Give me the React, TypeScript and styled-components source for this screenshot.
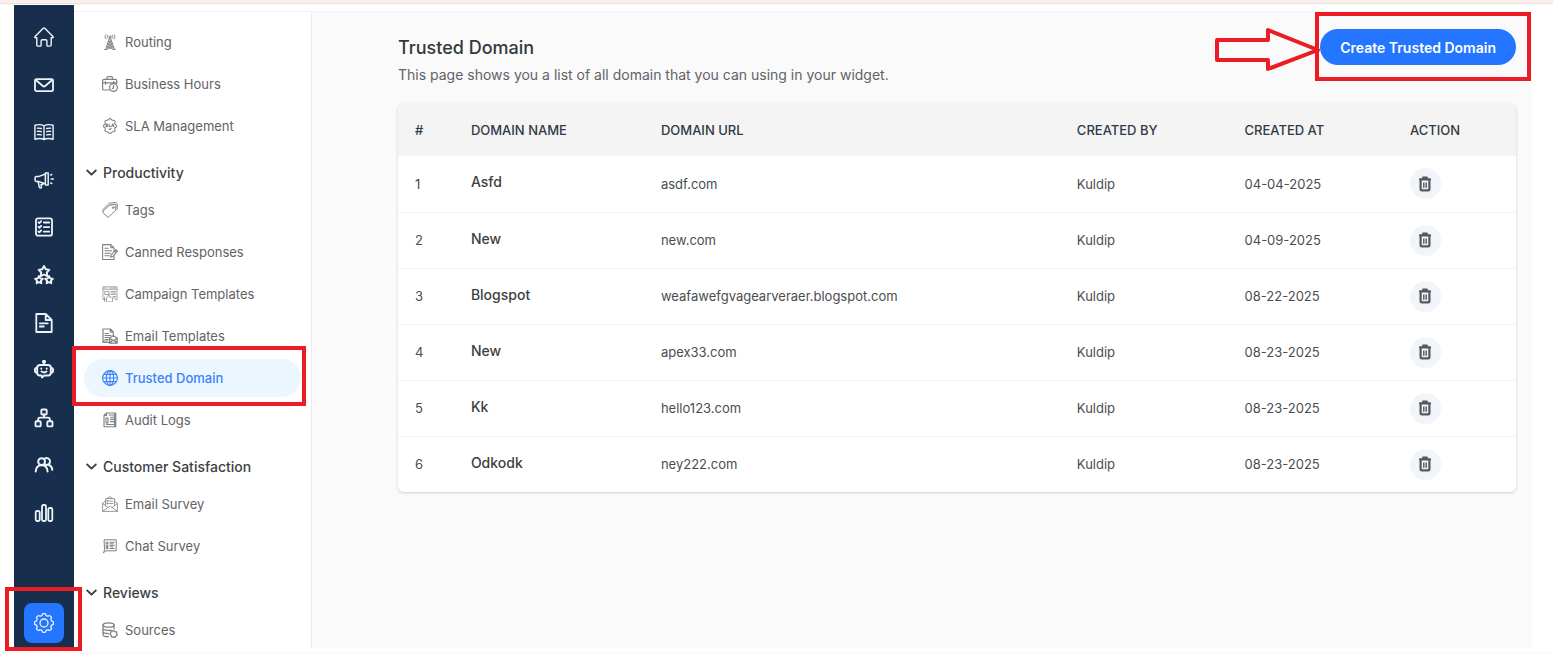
import React from "react";
import styled, { createGlobalStyle, css } from "styled-components";

const GlobalStyle = createGlobalStyle`
  *, *::before, *::after { box-sizing: border-box; }
  body {
    margin: 0;
    background: #ffffff;
    color: #3c4043;
    font-family: Inter, "Liberation Sans", sans-serif;
    font-size: 14px;
  }
  button { font: inherit; border: 0; cursor: pointer; }
  a { color: inherit; text-decoration: none; }
`;

const Page = styled.div`
  display: flex;
  flex-direction: column;
  height: 100vh;
  min-width: 1100px;
`;

const TopStrip = styled.div`
  flex: none;
  height: 4px;
  background: #f9f0ed;
  border-bottom: 1px solid #eee0dd;
`;

const BottomStrip = styled.div`
  flex: none;
  height: 2px;
  background: #fafafa;
`;

const Shell = styled.div`
  display: flex;
  flex: 1;
  min-height: 0;
  margin: 1px 21px 4px 14px;
`;

const Rail = styled.nav`
  display: flex;
  flex: none;
  flex-direction: column;
  align-items: center;
  width: 60px;
  padding: 20px 0 5px;
  background: #172e4d;
  color: #eef3f8;
`;

const RailList = styled.ul`
  display: flex;
  flex: 1;
  flex-direction: column;
  justify-content: space-between;
  margin: 0 0 78px;
  padding: 0;
  list-style: none;
`;

const RailLink = styled.a`
  display: flex;
  align-items: center;
  justify-content: center;
  width: 40px;
  height: 24px;
`;

const Marked = styled.div`
  position: relative;
`;

const Marker = styled.span<{ $inset: string }>`
  position: absolute;
  inset: ${(p) => p.$inset};
  z-index: 2;
  border: 4px solid #ec1c24;
  pointer-events: none;
`;

const SettingsLink = styled.a`
  display: flex;
  align-items: center;
  justify-content: center;
  width: 40px;
  height: 40px;
  border-radius: 8px;
  background: #2475ff;
`;

const Content = styled.div`
  display: flex;
  flex: 1;
  min-width: 0;
  margin-top: 6px;
  border-top: 1px solid #f3f3f3;
`;

const Sidebar = styled.nav`
  flex: none;
  width: 238px;
  padding: 9px 10px 0;
  border-right: 1px solid #ececec;
  background: #ffffff;
  overflow-x: visible;
  overflow-y: clip;
`;

const GroupToggle = styled.button`
  display: flex;
  align-items: center;
  gap: 6px;
  width: 100%;
  height: 42px;
  padding: 8px 0 0 2px;
  background: none;
  color: #3c3f43;
  font-size: 14px;
  font-weight: 500;
`;

const GroupList = styled.ul`
  margin: 0;
  padding: 0;
  list-style: none;
`;

const NavItem = styled.li`
  position: relative;
  padding: 2px 0;
`;

const NavLink = styled.a<{ $active?: boolean }>`
  display: flex;
  align-items: center;
  gap: 7px;
  height: 38px;
  padding-left: 18px;
  border-radius: 19px;
  color: #5f6368;
  font-size: 13px;
  svg {
    color: #7d8084;
  }
  ${(p) =>
    p.$active &&
    css`
      background: #ecf6ff;
      color: #3c83f6;
      font-weight: 500;
      svg {
        color: #3c83f6;
      }
    `}
`;

const Main = styled.main`
  flex: 1;
  min-width: 0;
  padding: 17px 16px 0 86px;
  background: #fafafa;
`;

const PageHead = styled.header`
  display: flex;
  align-items: flex-start;
  justify-content: space-between;
  margin-bottom: 18px;
`;

const Title = styled.h1`
  margin: 7px 0 5px;
  color: #35383b;
  font-size: 18px;
  font-weight: 500;
  line-height: 24px;
`;

const Subtitle = styled.p`
  margin: 0;
  color: #5f6368;
  font-size: 14px;
  line-height: 20px;
`;

const CreateButton = styled.button`
  height: 36px;
  padding: 0 20px;
  border-radius: 18px;
  background: #2475ff;
  color: #ffffff;
  font-size: 14px;
  font-weight: 600;
  white-space: nowrap;
`;

const ArrowSvg = styled.svg`
  position: absolute;
  right: 100%;
  top: -2px;
  z-index: 3;
  overflow: visible;
`;

const TableCard = styled.div`
  overflow: hidden;
  border-radius: 6px;
  background: #ffffff;
  box-shadow: 0 1px 3px rgba(0, 0, 0, 0.18);
`;

const Table = styled.table`
  width: 100%;
  border-collapse: collapse;
  table-layout: fixed;
`;

const HeadCell = styled.th<{ $width: string }>`
  width: ${(p) => p.$width};
  height: 53px;
  padding: 0 0 0 17px;
  background: #f4f4f4;
  color: #2f3a45;
  font-size: 13px;
  font-weight: 500;
  text-align: left;
`;

const BodyRow = styled.tr`
  height: 56px;
  & + & {
    border-top: 1px solid #f3f3f3;
  }
`;

const Cell = styled.td<{ $strong?: boolean }>`
  padding: 0 0 0 17px;
  color: #4a4d50;
  font-size: 13px;
  ${(p) =>
    p.$strong &&
    css`
      padding-bottom: 4px;
      color: #3c3f42;
      font-size: 14px;
      font-weight: 500;
    `}
`;

const DeleteButton = styled.button`
  display: flex;
  align-items: center;
  justify-content: center;
  width: 31px;
  height: 31px;
  padding: 0;
  border-radius: 50%;
  background: #f1f5f9;
  color: #55585c;
`;

type IconProps = { size?: number; box?: number; weight?: number; children: React.ReactNode };

function Icon({ size = 20, box = 20, weight = 1.5, children }: IconProps) {
  return (
    <svg
      width={size}
      height={size}
      viewBox={`0 0 ${box} ${box}`}
      fill="none"
      stroke="currentColor"
      strokeWidth={weight}
      strokeLinecap="round"
      strokeLinejoin="round"
      aria-hidden="true"
    >
      {children}
    </svg>
  );
}

const star = (cx: number, cy: number, r: number) =>
  Array.from({ length: 10 }, (_, i) => {
    const radius = i % 2 ? r * 0.52 : r;
    const angle = -Math.PI / 2 + (i * Math.PI) / 5;
    return `${(cx + radius * Math.cos(angle)).toFixed(2)},${(cy + radius * Math.sin(angle)).toFixed(2)}`;
  }).join(" ");

const railIcons: { label: string; icon: React.ReactNode }[] = [
  {
    label: "Home",
    icon: (
      <Icon weight={1.4}>
        <path d="M2.8 10.8H1.6c-.8 0-1-.8-.5-1.3L9.2 1.3c.5-.5 1.1-.5 1.6 0l8.1 8.2c.5.5.3 1.3-.5 1.3h-1.2v7c0 .8-.5 1.3-1.3 1.3h-2.2c-.5 0-.8-.3-.8-.8v-4.2c0-.8-.5-1.3-1.2-1.3H8.3c-.8 0-1.200.5-1.200 1.300v4.200c0 .5-.3.8-.8.8H4.100c-.8 0-1.300-.5-1.300-1.300z" />
      </Icon>
    ),
  },
  {
    label: "Inbox",
    icon: (
      <Icon weight={1.8}>
        <rect x="1" y="4.200" width="18" height="12" rx="1.6" />
        <path d="M1.600 4.800 8.800 11c.8.7 1.600.7 2.400 0l7.200-6.200" />
      </Icon>
    ),
  },
  {
    label: "Knowledge base",
    icon: (
      <Icon weight={1.4}>
        <path d="M10 4C8 2.600 4 2.500.9 3.200v14c3.100-.8 7.100-.7 9.100.5 2-1.200 6-1.300 9.100-.5v-14C16 2.500 12 2.600 10 4zM10 4v13.500" />
        <path d="M3.400 6.200c1.400-.2 2.600-.1 3.900.3M3.400 9.400c1.400-.2 2.600-.1 3.900.3M3.400 12.600c1.400-.2 2.600-.1 3.900.3M16.600 6.200c-1.400-.2-2.600-.1-3.900.3M16.600 9.400c-1.400-.2-2.600-.1-3.900.3M16.600 12.600c-1.400-.2-2.600-.1-3.900.3" />
      </Icon>
    ),
  },
  {
    label: "Campaigns",
    icon: (
      <Icon weight={1.5}>
        <path d="M11.400 4 4.400 6.600H2.300c-.9 0-1.300.9-1.300 2.400s.4 2.400 1.300 2.400h2.100l7 2.600zM11.400 3h2.800v12h-2.800z" />
        <path d="m4.200 11.600 1 5.300c.1.700.5 1.100 1.200 1.100s1.100-.4 1-1.100l-.4-2.400h1.800v-1.700" />
        <path d="m16.700 5 1-.5M17.300 9h2M16.700 13l1 .5" />
      </Icon>
    ),
  },
  {
    label: "Tasks",
    icon: (
      <Icon weight={1.8}>
        <rect x="2" y="1.300" width="16" height="17.400" rx="2" />
        <path d="m4.500 5.300.9.9 1.800-2M4.500 9.900l.9.900 1.800-2M4.500 14.500l.9.900 1.800-2M9.800 5.500h5.400M9.800 10.100h5.400M9.800 14.700h5.400" />
      </Icon>
    ),
  },
  {
    label: "Reviews",
    icon: (
      <Icon weight={1.9}>
        <polygon points={star(10, 6.6, 5.600)} />
        <polygon points={star(5, 15, 4)} />
        <polygon points={star(15, 15, 4)} />
      </Icon>
    ),
  },
  {
    label: "Documents",
    icon: (
      <Icon weight={1.8}>
        <path d="M2.300 1h9.400L17.700 7v12H2.300zM11.700 1v6h6M5.800 10.300h8M5.800 13.500h4" />
      </Icon>
    ),
  },
  {
    label: "Chatbot",
    icon: (
      <Icon weight={1.9}>
        <path d="M6 5h8c1.700 0 2.800 1.100 2.800 2.800v4.900c0 1.700-1.100 2.800-2.800 2.800h-3.600l-2.400 2-.4-2H6c-1.700 0-2.800-1.100-2.800-2.800V7.800C3.200 6.100 4.300 5 6 5zM10 4.500V2.400" />
        <circle cx="10" cy="1.800" r="1.100" />
        <path d="M3 7.700c-1.400 0-2.100.8-2.100 2.400s.7 2.500 2.100 2.500M17 7.700c1.400 0 2.100.8 2.100 2.400s-.7 2.500-2.100 2.500M7.300 8.400v.4M12.700 8.400v.4M7.500 11.600c1.500 1.100 3.500 1.100 5 0" />
      </Icon>
    ),
  },
  {
    label: "Departments",
    icon: (
      <Icon weight={1.9}>
        <rect x="7.300" y="1.500" width="5.400" height="5" rx="1" />
        <rect x="1.500" y="13.200" width="5.200" height="5.200" rx="1" />
        <rect x="13.300" y="13.200" width="5.200" height="5.200" rx="1" />
        <path d="M10 6.500v3M4.100 13v-1.300c0-1.400.7-2.100 2.100-2.100h7.600c1.400 0 2.100.7 2.100 2.100V13" />
      </Icon>
    ),
  },
  {
    label: "Contacts",
    icon: (
      <Icon weight={2}>
        <circle cx="7.600" cy="6.700" r="3.400" />
        <path d="M1.700 16.500c.3-3.900 2.500-6.200 5.900-6.200s5.700 2.300 6 6.200M10.600 3.700c2-1.500 5.400-.3 5.400 2.700 0 2.800-2.700 4.200-4.900 3.100M14.600 9.900c2.200.7 3.500 2.300 3.700 4.900" />
      </Icon>
    ),
  },
  {
    label: "Reports",
    icon: (
      <Icon weight={1.8}>
        <rect x="1.700" y="8" width="4" height="10" rx="1.400" />
        <rect x="8" y="2" width="4" height="16" rx="1.400" />
        <rect x="14.300" y="5" width="4" height="13" rx="1.400" />
      </Icon>
    ),
  },
];

function Small({ children, weight = 0.9 }: { children: React.ReactNode; weight?: number }) {
  return (
    <Icon size={16} box={16} weight={weight}>
      {children}
    </Icon>
  );
}

const navIcons: Record<string, React.ReactNode> = {
  Routing: (
    <Small>
      <path d="M7.300 4.500 3.500 15.500M8.700 4.500l3.800 11M8 3.500v3M6.400 7.500h3.200M5.600 10h4.800M4.700 12.800h6.600M6.400 7.500l4 2.500-5.700 2.800 7.800 2.700M9.600 7.500l-4 2.500 5.700 2.800-7.800 2.700M2.600 15.500H5M11 15.500h2.400" />
      <circle cx="8" cy="2.800" r="1" />
      <path d="M5.700 1.300c-.8.9-.8 2.100 0 3M10.300 1.300c.8.9.8 2.100 0 3M3.900.6c-1.300 1.500-1.300 3 0 4.400M12.100.6c1.300 1.500 1.300 3 0 4.400" />
    </Small>
  ),
  "Business Hours": (
    <Small weight={1.2}>
      <path d="M7.500 14H2.200C1.200 14 .6 13.400.6 12.400V5c0-1 .6-1.600 1.600-1.600h11c1 0 1.600.6 1.600 1.600v2.600M5 3.200V1.600c0-.6.3-.9.9-.9h3.600c.6 0 .9.3.9.9v1.600M.8 6.800h13.800M3.500 5.600v2.500M11.600 5.600v1.300M6 3.400h3.500" />
      <circle cx="11.500" cy="11.500" r="3.900" />
      <path d="M11.500 9.300v2.400l-1.300 1" />
    </Small>
  ),
  "SLA Management": (
    <Small weight={1.1}>
      <path d="M8 .6c1 0 1.500.5 2 1.400.1.200.3.300.5.300 1.200-.1 2.100.1 2.500.9.400.7.200 1.300-.3 2.100-.1.200-.1.400 0 .600 1.100.5 1.900 1.100 1.900 2.100s-.8 1.600-1.900 2.100c-.1.200-.1.400 0 .6.500.8.700 1.400.3 2.100-.4.800-1.300 1-2.500.9-.2 0-.4.100-.5.300-.5.900-1 1.400-2 1.400s-1.500-.5-2-1.400c-.1-.2-.3-.3-.5-.3-1.200.1-2.100-.1-2.500-.9-.4-.7-.2-1.300.3-2.100.1-.2.100-.4 0-.6C2.200 9.600 1.400 9 1.400 8s.8-1.600 1.900-2.100c.1-.2.100-.4 0-.6-.5-.8-.7-1.400-.3-2.100.4-.8 1.300-1 2.500-.9.2 0 .4-.1.500-.3.500-.9 1-1.400 2-1.400z" />
      <path d="M5.500 6.300c-.8-.5-1.600-.2-1.600.4 0 .9 1.700.5 1.700 1.300 0 .7-1.100.9-1.800.3M7.200 6v2.500h1.300M9.700 8.500l1.100-2.500 1.100 2.500M10.100 7.700h1.400M7 11l.8.7 1.400-1.300" />
    </Small>
  ),
  Tags: (
    <Small weight={1}>
      <path d="M8.500 3 13 2.300c.6 0 1 .4 1 .9l-.3 4.200c0 .5-.2.9-.6 1.300l-6 6c-.6.6-1.300.6-1.900 0L1.200 10.900c-.6-.6-.6-1.300 0-1.900l6-5.400c.4-.4.8-.6 1.300-.6z" />
      <path d="M1.100 8.900C.6 8.300.7 7.800 1.200 7.300L7 1.600c.4-.4.8-.6 1.300-.6L13 .6c1.500-.1 2.300.7 2.300 2.100l-.1 3.600c0 .7-.3 1.100-1.100 1.900" />
      <circle cx="11.300" cy="5.600" r=".9" />
    </Small>
  ),
  "Canned Responses": (
    <Small weight={1.100}>
      <path d="M12 11.500v4H.6V.6h8.200L12 3.800v3.400M8.800.6v3.200H12M3 4.300h3.300M3 6.800h6.500M3 9.300h5.500M3 11.800h4.200" />
      <path d="m8.500 13.300.6-2.300 4.700-5.300 1.600 1.500-4.600 5.300zM12.700 6.900l1.600 1.500" />
    </Small>
  ),
  "Campaign Templates": (
    <Small weight={0.7}>
      <path d="M3.500 13.500H1V.8h14v13h-1.500M1 3.300h14M2.500 2h.2M4.300 2h.2M8 2h5.500M3 5.500h4v3H3zM9 5.500h4.500M9 7h4.500M9 8.500h4.500M11 10.500h2.500M11 12h2.500" />
      <path d="M4.500 15.500v-4l1.500-1v-1.700c0-1 1.300-1 1.300 0v2l2.200.5c.7.2 1 .6 1 1.300v2.900zM2.500 11v4.500" />
    </Small>
  ),
  "Email Templates": (
    <Small weight={1.2}>
      <path d="M6.500 14.500H1V1h7.300l3 3v4M8.300 1v3h3M3 5.500h3.500M3 7.500h6M3 9.500h4M3 11.500h3M2 13h4" />
      <path d="M7.500 10 11.300 7.800 15.200 10v5.200H7.500zM7.500 10.200l3.900 2.500 3.800-2.500M7.600 15l3-2.700M15.100 15l-3-2.700" />
    </Small>
  ),
  "Trusted Domain": (
    <Small weight={1.1}>
      <circle cx="8" cy="8" r="7.400" />
      <ellipse cx="8" cy="8" rx="3.700" ry="7.400" />
      <path d="M8 .6v14.800M.6 8h14.800M1.800 4.400h12.400M1.800 11.600h12.400" />
    </Small>
  ),
  "Audit Logs": (
    <Small weight={1.1}>
      <path d="M4.500 1h9.300v13.800H2V3.300zM4.500 1v2.500H2M7 3h5M8.500 5.200h3.300M8.500 7.400h3.300M8.500 9.600h3.300M4.500 12.500h7.300M4 6.500c0-1 2-1 2 0v4c0 .9-2 .9-2 0zM12.600 2v12" />
    </Small>
  ),
  "Email Survey": (
    <Small weight={0.8}>
      <path d="M3.500 5 .6 7.300v8.100h14.800V7.300L12.500 5M.6 7.500 6 11.500M15.400 7.500 10 11.500M.8 15.200 6.600 11c.9-.6 1.900-.6 2.800 0l5.800 4.200M3.500 9.500V2.500h9v7M5.500 2.500l2.500-2 2.500 2" />
      <path d="M5.300 4.500h.9v.9h-.9zM5.300 7h.9v.9h-.9zM7.500 5h3.300M7.500 7.500h3.300" />
    </Small>
  ),
  "Chat Survey": (
    <Small weight={1}>
      <path d="M2.500 1.800h11.700v11H4L1.300 14.800c.8-1.100 1.200-2 1.200-3.200z" />
      <path d="M4.500 4.200H6v1.600H4.500zM4.500 7H6v1.300H4.500zM4.500 9.500H6v1.200H4.500zM8 4.300h4.300M8 5.800h3M8 7.300h4.300M8 8.800h3M8 10.500h4.300" />
    </Small>
  ),
  Sources: (
    <Small weight={1.3}>
      <ellipse cx="6.500" cy="3" rx="5.500" ry="2.200" />
      <path d="M1 3v9.400c0 1.200 2.300 2.200 5.500 2.200M12 3v3.800M1 6.300c0 1.200 2.500 2.100 5.500 2.100 1 0 1.900-.1 2.600-.3M1 9.600c0 1.200 2.500 2.100 5.500 2.100" />
      <path d="M11.600 8.600 13 9.700l1.700.3-.1 1.700.6 1.600-1.500.9-1 1.400-1.500-.7-1.500.2-.5-1.700-1.200-1.200.9-1.400.1-1.700 1.600-.1z" />
    </Small>
  ),
};

const groups: { title?: string; items: string[] }[] = [
  { items: ["Routing", "Business Hours", "SLA Management"] },
  {
    title: "Productivity",
    items: ["Tags", "Canned Responses", "Campaign Templates", "Email Templates", "Trusted Domain", "Audit Logs"],
  },
  { title: "Customer Satisfaction", items: ["Email Survey", "Chat Survey"] },
  { title: "Reviews", items: ["Sources"] },
];

const columns = [
  { label: "#", width: "5%" },
  { label: "DOMAIN NAME", width: "17%" },
  { label: "DOMAIN URL", width: "37.2%" },
  { label: "CREATED BY", width: "15%" },
  { label: "CREATED AT", width: "14.8%" },
  { label: "ACTION", width: "11%" },
];

const domains = [
  { name: "Asfd", url: "asdf.com", by: "Kuldip", at: "04-04-2025" },
  { name: "New", url: "new.com", by: "Kuldip", at: "04-09-2025" },
  { name: "Blogspot", url: "weafawefgvagearveraer.blogspot.com", by: "Kuldip", at: "08-22-2025" },
  { name: "New", url: "apex33.com", by: "Kuldip", at: "08-23-2025" },
  { name: "Kk", url: "hello123.com", by: "Kuldip", at: "08-23-2025" },
  { name: "Odkodk", url: "ney222.com", by: "Kuldip", at: "08-23-2025" },
];

function Chevron() {
  return (
    <Icon size={11} box={11} weight={1.8}>
      <path d="m1.200 3.500 4.300 4.200 4.300-4.200" />
    </Icon>
  );
}

function GearIcon() {
  const teeth = Array.from({ length: 8 }, (_, i) => {
    const point = (degrees: number, r: number) => {
      const a = ((i * 45 + degrees - 90) * Math.PI) / 180;
      return `${(10 + r * Math.cos(a)).toFixed(2)} ${(10 + r * Math.sin(a)).toFixed(2)}`;
    };
    return `${i ? "L" : "M"}${point(-13, 8.2)}Q${point(-10, 9.6)} ${point(-4, 9.4)}L${point(4, 9.4)}Q${point(10, 9.6)} ${point(13, 8.2)}Q${point(22.5, 7.2)} ${point(32, 8.2)}`;
  }).join("");
  return (
    <Icon weight={1.3}>
      <path d={`${teeth}Z`} />
      <circle cx="10" cy="10" r="4" />
    </Icon>
  );
}

function TrashIcon() {
  return (
    <Icon size={16} box={16} weight={2.2}>
      <path d="M3 3.300h10M6.200 1.700h3.600" />
      <path d="M3.600 4v9c0 .9.5 1.400 1.400 1.400h6c.9 0 1.400-.5 1.400-1.400V4" />
      <path d="M6.800 7v4.300M9.200 7v4.300" strokeWidth="1.400" />
    </Icon>
  );
}

export default function App() {
  return (
    <>
      <GlobalStyle />
      <Page>
        <TopStrip />
        <Shell>
          <Rail aria-label="Main">
            <RailList>
              {railIcons.map((item) => (
                <li key={item.label}>
                  <RailLink href="#" aria-label={item.label}>
                    {item.icon}
                  </RailLink>
                </li>
              ))}
            </RailList>
            <Marked>
              <SettingsLink href="#" aria-label="Settings">
                <GearIcon />
              </SettingsLink>
              <Marker $inset="-16px -18px -8px -19px" />
            </Marked>
          </Rail>
          <Content>
            <Sidebar aria-label="Settings">
              {groups.map((group, index) => (
                <React.Fragment key={index}>
                  {group.title && (
                    <GroupToggle type="button" aria-expanded="true">
                      <Chevron />
                      {group.title}
                    </GroupToggle>
                  )}
                  <GroupList>
                    {group.items.map((label) => {
                      const active = label === "Trusted Domain";
                      return (
                        <NavItem key={label}>
                          <NavLink href="#" $active={active} aria-current={active ? "page" : undefined}>
                            {navIcons[label]}
                            {label}
                          </NavLink>
                          {active && <Marker $inset="-11px -5px -7px -12px" />}
                        </NavItem>
                      );
                    })}
                  </GroupList>
                </React.Fragment>
              ))}
            </Sidebar>
            <Main>
              <PageHead>
                <div>
                  <Title>Trusted Domain</Title>
                  <Subtitle>This page shows you a list of all domain that you can using in your widget.</Subtitle>
                </div>
                <Marked>
                  <CreateButton type="button">Create Trusted Domain</CreateButton>
                  <Marker $inset="-17px -15px -16px -5px" />
                  <ArrowSvg width="105" height="44" viewBox="1 0 105 44" fill="none" aria-hidden="true">
                    <path
                      d="M3 13h51V3l50 20-50 19V33H3z"
                      stroke="#ec1c24"
                      strokeWidth="4"
                      strokeLinejoin="round"
                    />
                  </ArrowSvg>
                </Marked>
              </PageHead>
              <TableCard>
                <Table>
                  <thead>
                    <tr>
                      {columns.map((column) => (
                        <HeadCell key={column.label} $width={column.width} scope="col">
                          {column.label}
                        </HeadCell>
                      ))}
                    </tr>
                  </thead>
                  <tbody>
                    {domains.map((domain, index) => (
                      <BodyRow key={index}>
                        <Cell>{index + 1}</Cell>
                        <Cell $strong>{domain.name}</Cell>
                        <Cell>{domain.url}</Cell>
                        <Cell>{domain.by}</Cell>
                        <Cell>{domain.at}</Cell>
                        <Cell>
                          <DeleteButton type="button" aria-label={`Delete ${domain.name}`}>
                            <TrashIcon />
                          </DeleteButton>
                        </Cell>
                      </BodyRow>
                    ))}
                  </tbody>
                </Table>
              </TableCard>
            </Main>
          </Content>
        </Shell>
        <BottomStrip />
      </Page>
    </>
  );
}
